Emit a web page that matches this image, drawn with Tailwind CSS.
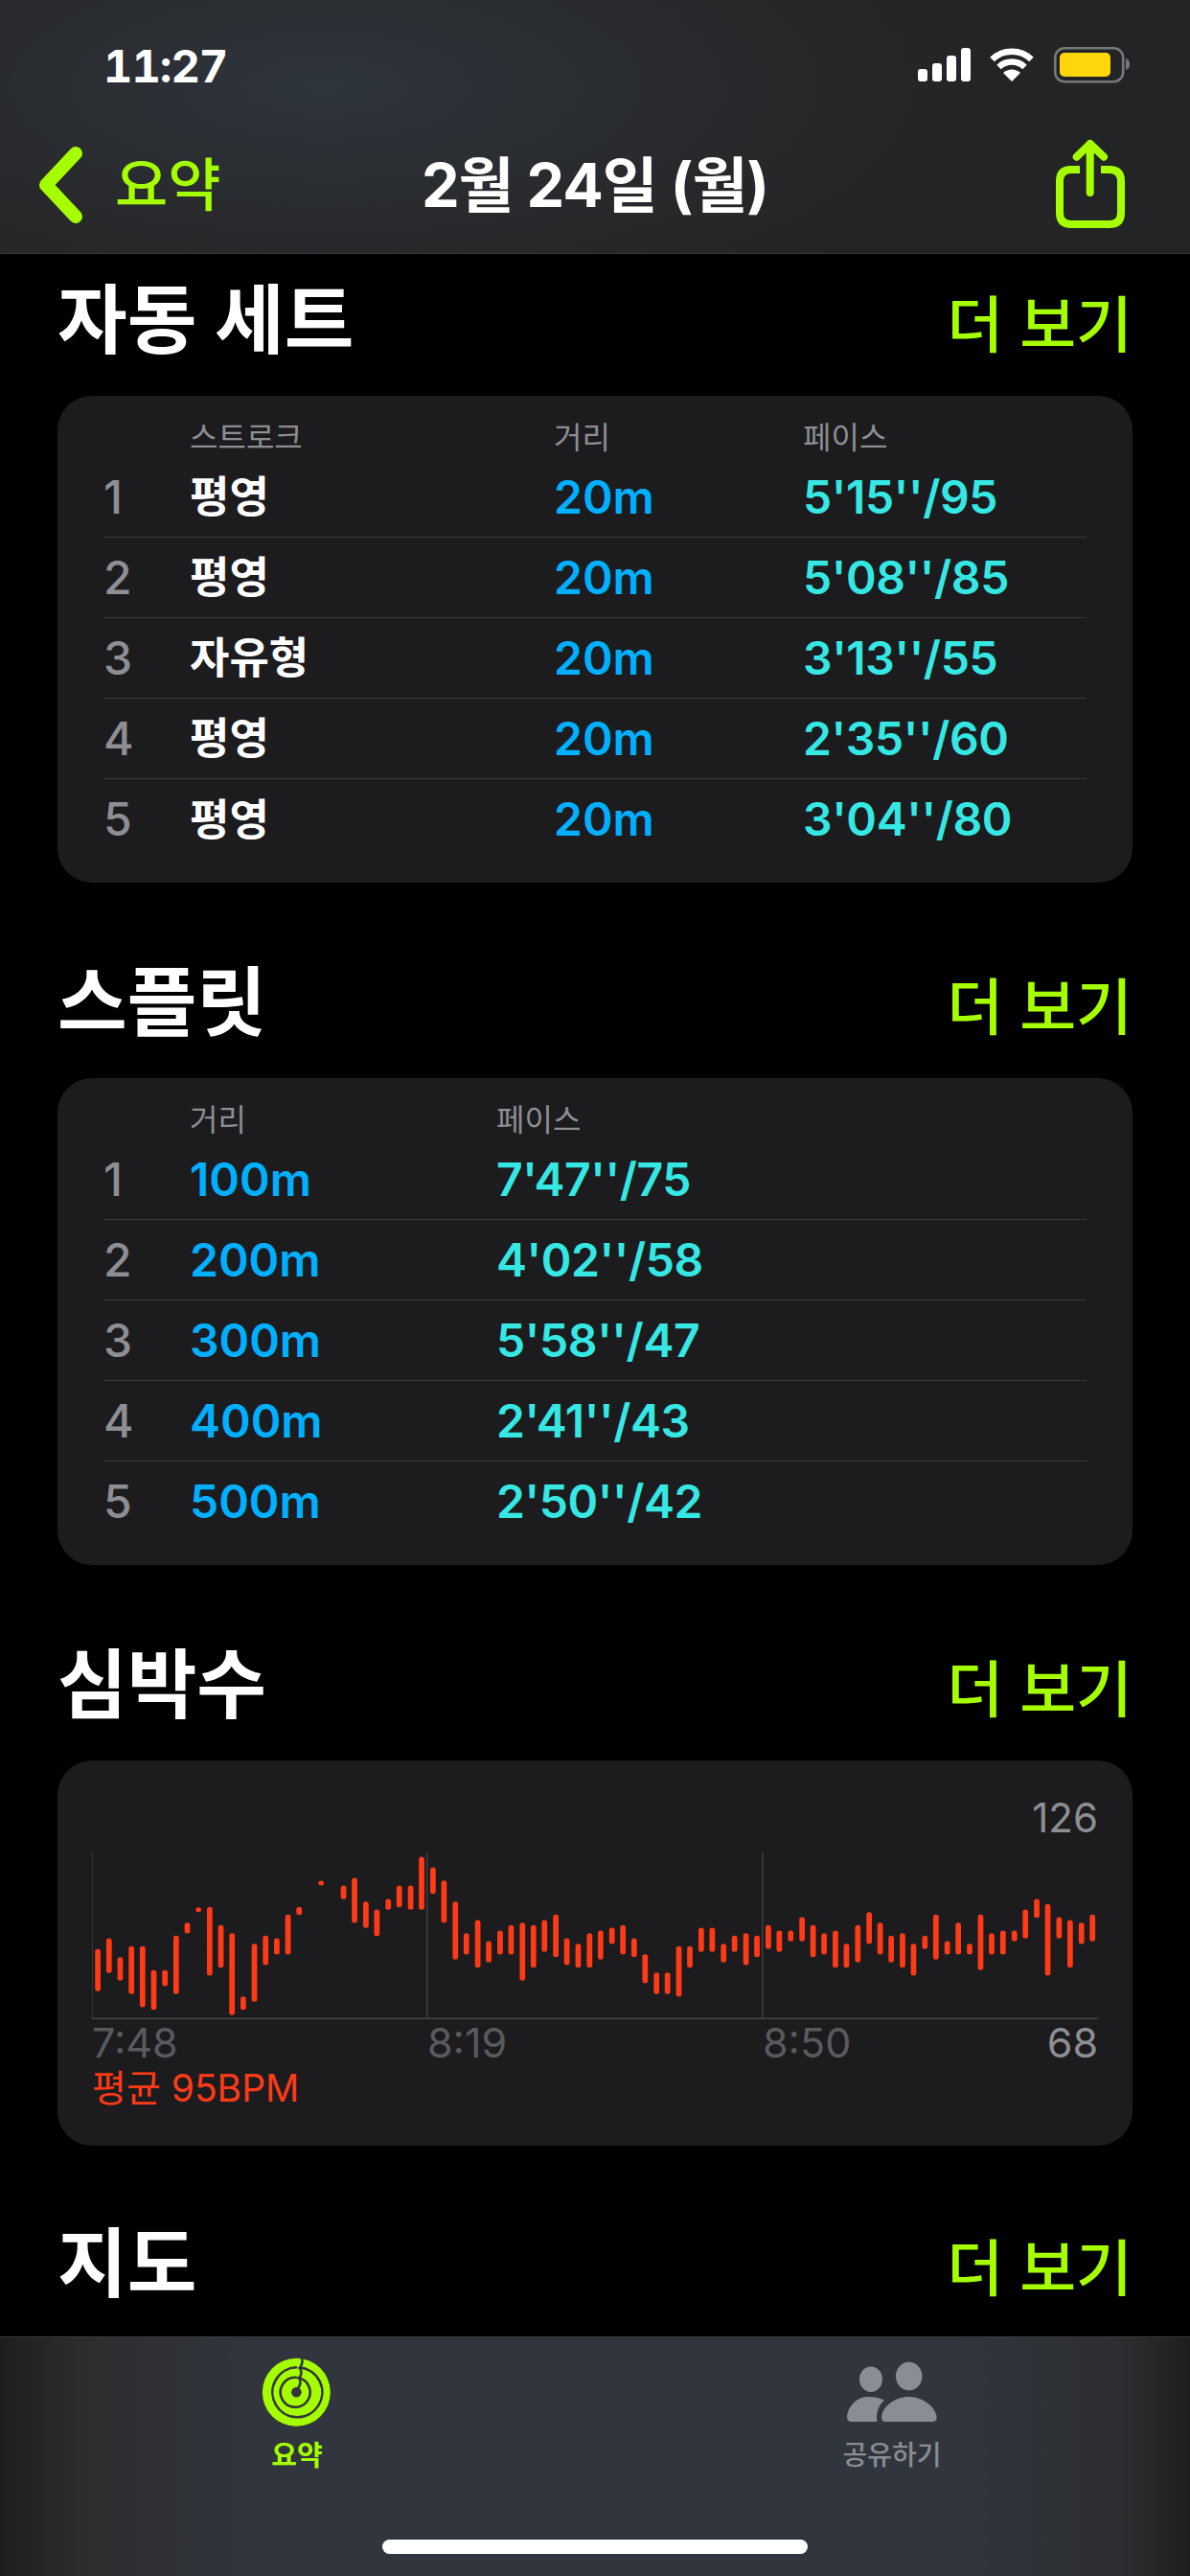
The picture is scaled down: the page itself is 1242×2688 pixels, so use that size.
<!doctype html>
<html lang="ko">
<head>
<meta charset="utf-8">
<title>2월 24일 (월)</title>
<script src="https://cdn.jsdelivr.net/npm/@tailwindcss/browser@4"></script>
</head>
<body class="bg-black">
<div class="w-[1242px] h-[2688px] flex flex-col overflow-hidden bg-black text-white font-['Inter','Noto_Sans_CJK_KR',sans-serif]">

  <header class="h-[265px] shrink-0 border-b border-[#38393a] bg-[radial-gradient(ellipse_700px_260px_at_340px_90px,#2f353d_0%,#282a2d_55%,#222425_100%)]">
    <div class="h-[136px] flex items-center justify-between pl-[108px] pr-[62px]">
      <span class="text-[47px] font-bold leading-none tabular-nums tracking-[-1px]">11:27</span>
      <svg width="222" height="40" viewBox="957 48 222 40" class="block">
        <g fill="#fff">
          <rect x="957" y="72" width="10" height="13" rx="3"/>
          <rect x="972" y="66" width="10" height="19" rx="3"/>
          <rect x="987" y="58" width="10" height="27" rx="3"/>
          <rect x="1002" y="50" width="10" height="35" rx="3"/>
          <path d="M1055 85 L1046 76 A13 13 0 0 1 1064 76 Z"/>
        </g>
        <g fill="none" stroke="#fff" stroke-width="6.5">
          <path d="M1041.5 70 A19.5 19.5 0 0 1 1068.5 70"/>
          <path d="M1034.5 62 A29.5 29.5 0 0 1 1075.5 62"/>
        </g>
        <rect x="1100.2" y="50.2" width="71" height="35" rx="10" fill="none" stroke="#77787a" stroke-width="2.6"/>
        <rect x="1105" y="55" width="53" height="25" rx="5" fill="#ffd60a"/>
        <path d="M1174 61 C1177 62 1178 64 1178 67 C1178 70 1177 72 1174 73 Z" fill="#77787a"/>
      </svg>
    </div>
    <div class="h-[114px] grid grid-cols-[1fr_auto_1fr] items-center">
      <div class="flex items-center pl-[38px] gap-[32px]">
        <svg width="50" height="80" viewBox="0 0 50 80" class="block">
          <path d="M41 7 L10 40 L41 73" fill="none" stroke="#a6ff00" stroke-width="14" stroke-linecap="round" stroke-linejoin="round"/>
        </svg>
        <span class="text-[60px] leading-none font-medium text-[#a6ff00]">요약</span>
      </div>
      <h1 class="text-[63px] leading-none font-bold tracking-[-1px]">2월 24일 (월)</h1>
      <div class="flex justify-end pr-[66px]">
        <svg width="76" height="96" viewBox="1098 144 76 96" class="block">
          <g fill="none" stroke="#a6ff00" stroke-width="8" stroke-linecap="round" stroke-linejoin="round">
            <path d="M1135.7 200 V149 M1121.7 162.7 L1135.7 149 L1150 162.7"/>
            <path stroke-linecap="butt" d="M1125 176 H1116 Q1104 176 1104 188 V221 Q1104 233 1116 233 H1156 Q1168 233 1168 221 V188 Q1168 176 1156 176 H1147"/>
          </g>
        </svg>
      </div>
    </div>
  </header>

  <main class="flex-1 min-h-0 overflow-hidden px-[60px] pt-[19px]">
    <section class="mb-[75px]">
      <div class="h-[100px] mb-[29px] flex items-center justify-between">
        <h2 class="text-[79px] leading-none font-bold">자동 세트</h2>
        <span class="text-[64px] leading-none font-medium text-[#a6ff00] pt-[9px]">더 보기</span>
      </div>
      <div class="rounded-[36px] bg-[#1c1c1e] px-[48px] pt-[24px] pb-[24px]">
        <div class="h-[40px] flex items-center text-[32px] leading-none text-[#8e8e93]">
          <span class="w-[90px]"></span><span class="w-[380px]">스트로크</span><span class="w-[260px]">거리</span><span>페이스</span>
        </div>
        <div class="h-[84px] flex items-center border-b border-[#3a3a3c] text-[48px] leading-none font-semibold">
          <span class="w-[90px] text-[#8e8e93] font-medium">1</span><span class="w-[380px] text-[45px]">평영</span><span class="w-[260px] text-[#00affe]">20m</span><span class="text-[#36e8e4] tracking-[-0.4px]">5'15''/95</span>
        </div>
        <div class="h-[84px] flex items-center border-b border-[#3a3a3c] text-[48px] leading-none font-semibold">
          <span class="w-[90px] text-[#8e8e93] font-medium">2</span><span class="w-[380px] text-[45px]">평영</span><span class="w-[260px] text-[#00affe]">20m</span><span class="text-[#36e8e4] tracking-[-0.4px]">5'08''/85</span>
        </div>
        <div class="h-[84px] flex items-center border-b border-[#3a3a3c] text-[48px] leading-none font-semibold">
          <span class="w-[90px] text-[#8e8e93] font-medium">3</span><span class="w-[380px] text-[45px]">자유형</span><span class="w-[260px] text-[#00affe]">20m</span><span class="text-[#36e8e4] tracking-[-0.4px]">3'13''/55</span>
        </div>
        <div class="h-[84px] flex items-center border-b border-[#3a3a3c] text-[48px] leading-none font-semibold">
          <span class="w-[90px] text-[#8e8e93] font-medium">4</span><span class="w-[380px] text-[45px]">평영</span><span class="w-[260px] text-[#00affe]">20m</span><span class="text-[#36e8e4] tracking-[-0.4px]">2'35''/60</span>
        </div>
        <div class="h-[84px] flex items-center text-[48px] leading-none font-semibold">
          <span class="w-[90px] text-[#8e8e93] font-medium">5</span><span class="w-[380px] text-[45px]">평영</span><span class="w-[260px] text-[#00affe]">20m</span><span class="text-[#36e8e4] tracking-[-0.4px]">3'04''/80</span>
        </div>
      </div>
    </section>

    <section class="mb-[75px]">
      <div class="h-[100px] mb-[29px] flex items-center justify-between">
        <h2 class="text-[79px] leading-none font-bold">스플릿</h2>
        <span class="text-[64px] leading-none font-medium text-[#a6ff00] pt-[9px]">더 보기</span>
      </div>
      <div class="rounded-[36px] bg-[#1c1c1e] px-[48px] pt-[24px] pb-[24px]">
        <div class="h-[40px] flex items-center text-[32px] leading-none text-[#8e8e93]">
          <span class="w-[90px]"></span><span class="w-[320px]">거리</span><span>페이스</span>
        </div>
        <div class="h-[84px] flex items-center border-b border-[#3a3a3c] text-[48px] leading-none font-semibold">
          <span class="w-[90px] text-[#8e8e93] font-medium">1</span><span class="w-[320px] text-[#00affe]">100m</span><span class="text-[#36e8e4] tracking-[-0.4px]">7'47''/75</span>
        </div>
        <div class="h-[84px] flex items-center border-b border-[#3a3a3c] text-[48px] leading-none font-semibold">
          <span class="w-[90px] text-[#8e8e93] font-medium">2</span><span class="w-[320px] text-[#00affe]">200m</span><span class="text-[#36e8e4] tracking-[-0.4px]">4'02''/58</span>
        </div>
        <div class="h-[84px] flex items-center border-b border-[#3a3a3c] text-[48px] leading-none font-semibold">
          <span class="w-[90px] text-[#8e8e93] font-medium">3</span><span class="w-[320px] text-[#00affe]">300m</span><span class="text-[#36e8e4] tracking-[-0.4px]">5'58''/47</span>
        </div>
        <div class="h-[84px] flex items-center border-b border-[#3a3a3c] text-[48px] leading-none font-semibold">
          <span class="w-[90px] text-[#8e8e93] font-medium">4</span><span class="w-[320px] text-[#00affe]">400m</span><span class="text-[#36e8e4] tracking-[-0.4px]">2'41''/43</span>
        </div>
        <div class="h-[84px] flex items-center text-[48px] leading-none font-semibold">
          <span class="w-[90px] text-[#8e8e93] font-medium">5</span><span class="w-[320px] text-[#00affe]">500m</span><span class="text-[#36e8e4] tracking-[-0.4px]">2'50''/42</span>
        </div>
      </div>
    </section>

    <section class="mb-[73px]">
      <div class="h-[100px] mb-[29px] flex items-center justify-between">
        <h2 class="text-[79px] leading-none font-bold">심박수</h2>
        <span class="text-[64px] leading-none font-medium text-[#a6ff00] pt-[9px]">더 보기</span>
      </div>
      <div class="rounded-[36px] bg-[#1c1c1e] px-[36px] pt-[36px] pb-[38px]">
        <div class="h-[48px] mb-[12px] flex items-center justify-end text-[42px] leading-none text-[#8e8e93]">126</div>
        <svg width="1050" height="174" viewBox="94 309 2743.6 522" preserveAspectRatio="none" class="block">
          <path fill="none" stroke="#4a4a4c" stroke-width="3" d="M94 309V831M1008 309V831M1922.6 309V831"/>
          <path fill="none" stroke="#4a4a4c" stroke-width="4.5" d="M94 829.5H2837.6"/>
          <path fill="none" stroke="#ff3a17" stroke-width="15" stroke-linecap="round" d="M110 619V736M140.5 585V679M171 644V703M201.5 610V745M232 610V786M262.5 685V794M293 685V720M323.5 577V745M354 536V555M384.5 488V488.1M415 487V687M445.5 544V662M476 569V811M506.5 767V794M537 602V769M567.5 577V654M598 585V621M628.5 511V621M659 487V497M719 405V405.1M780 420V448M810 396V522M841 470V538M871 495V563M902 462V481M932 420V473M963 420V481M993 330V481M1024 363V431M1054 404V522M1085 470V637M1115 569V621M1146 528V662M1176 594V646M1207 561V621M1237 544V621M1268 536V703M1298 544V662M1328 528V613M1359 511V629M1389 585V654M1420 602V662M1451 569V662M1481 561V637M1512 552V588M1542 544V621M1572.5 585V629M1602.5 635V711M1633.5 692V745M1663.5 692V745M1694.5 610V753M1724.5 610V662M1755.5 552V613M1785.5 552V613M1816.5 602V646M1846.5 577V613M1877.5 569V654M1907.5 577V629M1938.5 544V604M1968.5 561V613M1999.5 561V580M2030.5 519V580M2060.5 544V629M2090.5 569V621M2121.5 561V662M2151.5 602V662M2182.5 544V646M2213.5 503V588M2243.5 536V621M2273.5 577V646M2304.5 569V662M2334.5 602V687M2365.5 577V604M2395.5 511V637M2426.5 594V621M2456.5 536V621M2487.5 602V621M2517.5 511V670M2547.5 569V621M2578.5 561V621M2609.5 561V580M2639.5 495V571M2670.5 462V506M2700.5 478V687M2731.5 519V571M2761.5 528V662M2792.5 536V588M2822.5 511V580"/>
        </svg>
        <div class="h-[48px] flex items-center text-[43px] leading-none text-[#5a5a5d]">
          <span class="w-[350px]">7:48</span><span class="w-[350px]">8:19</span><span>8:50</span><span class="ml-auto text-[#8e8e93]">68</span>
        </div>
        <div class="h-[46px] flex items-center text-[39px] leading-none text-[#ff3a17]">평균 95BPM</div>
      </div>
    </section>

    <section>
      <div class="h-[100px] flex items-center justify-between">
        <h2 class="text-[79px] leading-none font-bold">지도</h2>
        <span class="text-[64px] leading-none font-medium text-[#a6ff00] pt-[9px]">더 보기</span>
      </div>
    </section>
  </main>

  <nav class="relative h-[250px] shrink-0 border-t border-[#3c3d3f] bg-[linear-gradient(to_right,#1d1f1f_0%,#2d2e30_8%,#31353d_22%,#31353d_80%,#2c2e31_94%,#1d1f1f_100%)]">
    <div class="flex h-full pt-[21px]">
      <div class="w-[620px] flex flex-col items-center">
        <svg width="100" height="100" viewBox="0 0 100 100" class="block -ml-[1px] -mb-[20px]" style="margin-top:-9px">
          <circle cx="49.3" cy="45.3" r="35.5" fill="#a6ff00"/>
          <g fill="none" stroke="#31353c" stroke-width="2.6" stroke-linecap="round">
            <path d="M55 9 C56 13 56 16 53 19.4 A26 26 0 1 1 49 19.3"/>
            <path d="M53 19.8 C55 24 55 28 51.8 30.2 A15.5 15.5 0 1 1 49 29.8"/>
            <path d="M52 30.5 C54 33 54 37 51 41"/>
          </g>
          <circle cx="49.3" cy="45.3" r="5.3" fill="#31353c"/>
        </svg>
        <span class="mt-[17px] text-[29px] leading-none font-semibold text-[#a6ff00]">요약</span>
      </div>
      <div class="w-[622px] flex flex-col items-center">
        <svg width="120" height="100" viewBox="0 0 120 100" class="block -mb-[20px]" style="margin-top:-9px">
          <g fill="#8a8d93">
            <ellipse cx="38" cy="31.7" rx="12" ry="13.2"/>
            <ellipse cx="77.7" cy="28.6" rx="13.8" ry="14.8"/>
            <path d="M53 76 Q49 76 49 71 C50 60 63 50 77.7 50 C92 50 105 60 106.7 71 Q106.7 76 102 76 Z"/>
            <path d="M44.5 76 H18 Q13 76 13 71 C14 60 23 50 35 50 C41 50 47 51 52 53.5 C46 59 43 66 44.5 76 Z"/>
          </g>
        </svg>
        <span class="mt-[17px] text-[28px] leading-none font-medium text-[#8a8d93]">공유하기</span>
      </div>
    </div>
    <div class="absolute left-[399px] top-[211px] w-[444px] h-[15px] rounded-full bg-white"></div>
  </nav>
</div>
</body>
</html>
